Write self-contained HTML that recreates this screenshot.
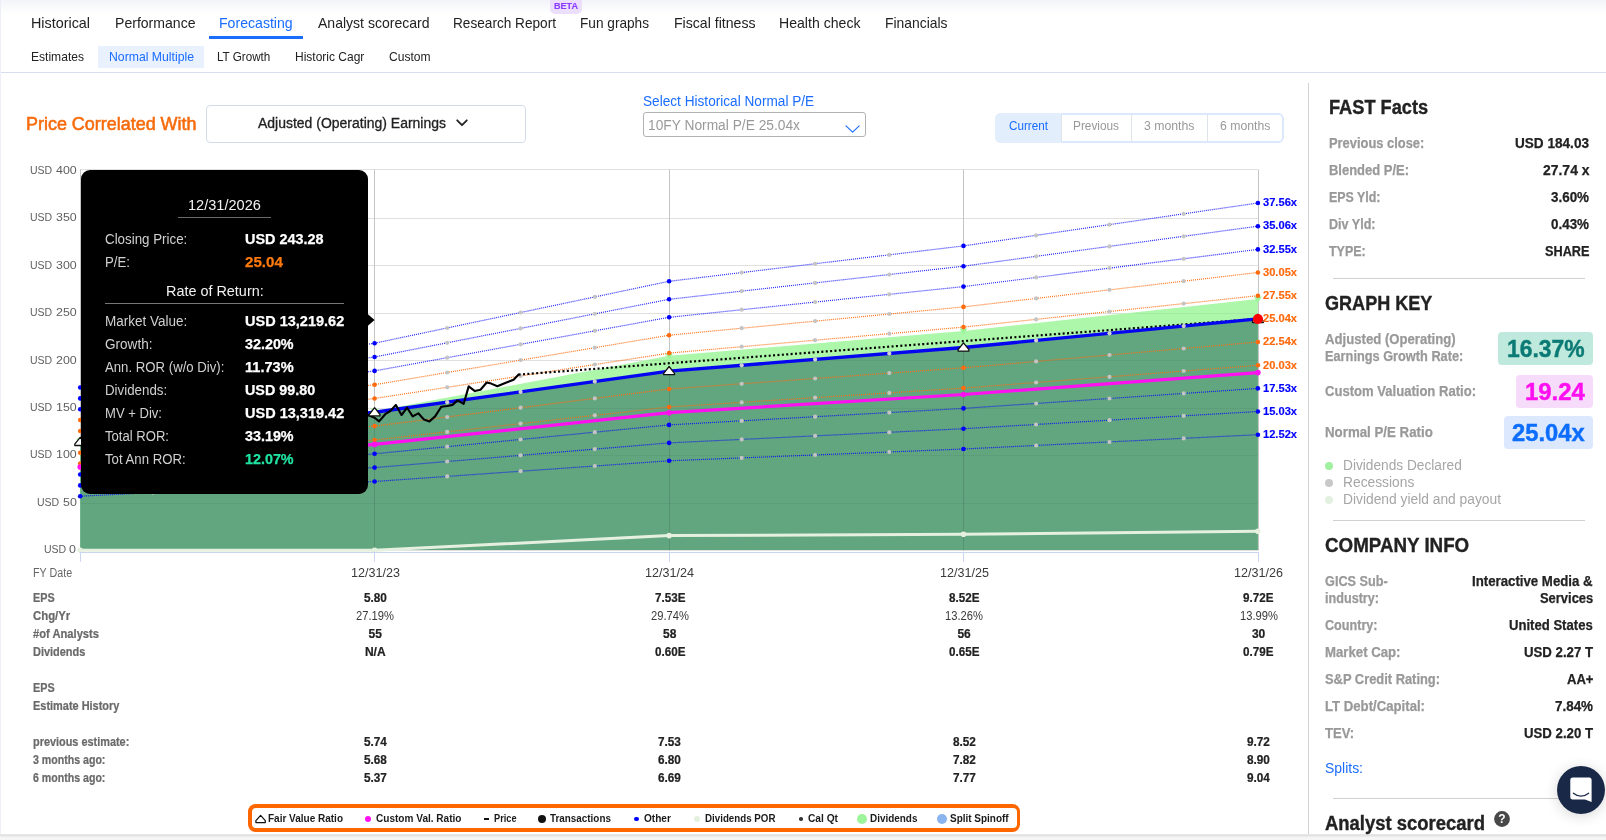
<!DOCTYPE html>
<html><head><meta charset="utf-8"><title>Forecasting</title>
<style>
html,body{margin:0;padding:0;background:#fff;}
body{width:1606px;height:840px;overflow:hidden;position:relative;font-family:"Liberation Sans",sans-serif;}
.a{position:absolute;display:block;}
.t{position:absolute;white-space:pre;transform-origin:0 50%;font-family:"Liberation Sans",sans-serif;}
#w{position:absolute;left:0;top:0;width:1606px;height:840px;will-change:transform;}
</style></head><body><div id="w">
<div class="a" style="left:0px;top:0px;width:1606px;height:14px;background:linear-gradient(#f3f4f9,#fff)"></div>
<div class="a" style="left:0px;top:0px;width:1px;height:834px;background:#eceff8"></div>
<div class="a" style="left:1px;top:72px;width:1605px;height:1px;background:#d6def0"></div>
<div class="a" style="left:0px;top:834px;width:1606px;height:6px;background:linear-gradient(#ececec 0px,#dfdfdf 1.2px,#ececec 2.6px,#f5f5f5 3.4px)"></div>
<span class="t" style="left:31.00px;top:15px;font-size:15px;line-height:15px;color:#222;transform:scaleX(0.9566);">Historical</span>
<span class="t" style="left:114.50px;top:15px;font-size:15px;line-height:15px;color:#222;transform:scaleX(0.9374);">Performance</span>
<span class="t" style="left:219.40px;top:15px;font-size:15px;line-height:15px;color:#1a6dff;transform:scaleX(0.9404);">Forecasting</span>
<span class="t" style="left:317.50px;top:15px;font-size:15px;line-height:15px;color:#222;transform:scaleX(0.9352);">Analyst scorecard</span>
<span class="t" style="left:453.00px;top:15px;font-size:15px;line-height:15px;color:#222;transform:scaleX(0.9084);">Research Report</span>
<span class="t" style="left:580.00px;top:15px;font-size:15px;line-height:15px;color:#222;transform:scaleX(0.9093);">Fun graphs</span>
<span class="t" style="left:673.50px;top:15px;font-size:15px;line-height:15px;color:#222;transform:scaleX(0.9401);">Fiscal fitness</span>
<span class="t" style="left:779.00px;top:15px;font-size:15px;line-height:15px;color:#222;transform:scaleX(0.9399);">Health check</span>
<span class="t" style="left:885.00px;top:15px;font-size:15px;line-height:15px;color:#222;transform:scaleX(0.9255);">Financials</span>
<div class="a" style="left:209px;top:36px;width:94px;height:3px;background:#1a6dff"></div>
<div class="a" style="left:550px;top:0px;width:32px;height:13.8px;background:#ebdffb;border-radius:0 0 5px 5px"></div>
<span class="t" style="left:553.70px;top:2px;font-size:9px;line-height:9px;color:#8b3dff;font-weight:700;-webkit-text-stroke-width:0.16px;transform:scaleX(1.0070);">BETA</span>
<div class="a" style="left:98px;top:46px;width:106px;height:22px;background:#e8f1fd"></div>
<span class="t" style="left:31.00px;top:50px;font-size:13px;line-height:13px;color:#222;transform:scaleX(0.9286);">Estimates</span>
<span class="t" style="left:108.50px;top:50px;font-size:13px;line-height:13px;color:#1a6dff;transform:scaleX(0.9413);">Normal Multiple</span>
<span class="t" style="left:217.40px;top:50px;font-size:13px;line-height:13px;color:#222;transform:scaleX(0.8960);">LT Growth</span>
<span class="t" style="left:295.10px;top:50px;font-size:13px;line-height:13px;color:#222;transform:scaleX(0.9224);">Historic Cagr</span>
<span class="t" style="left:388.50px;top:50px;font-size:13px;line-height:13px;color:#222;transform:scaleX(0.9288);">Custom</span>
<span class="t" style="left:25.50px;top:115px;font-size:18px;line-height:18px;color:#f76b0c;transform:scaleX(0.9967);-webkit-text-stroke:0.55px #f76b0c;">Price Correlated With</span>
<div class="a" style="left:206px;top:105px;width:320px;height:38px;border:1px solid #d3dbe8;border-radius:4px;box-sizing:border-box;background:#fff"></div>
<span class="t" style="left:258.00px;top:116px;font-size:14px;line-height:14px;color:#222;transform:scaleX(0.9983);-webkit-text-stroke:0.3px #222;">Adjusted (Operating) Earnings</span>
<svg class="a" style="left:455px;top:117px" width="14" height="12" viewBox="0 0 14 12"><path d="M2.2 3.3 L7 8.2 L11.8 3.3" fill="none" stroke="#222" stroke-width="1.8" stroke-linecap="round" stroke-linejoin="round"/></svg>
<span class="t" style="left:642.80px;top:94px;font-size:14px;line-height:14px;color:#1a6dff;transform:scaleX(0.9737);">Select Historical Normal P/E</span>
<div class="a" style="left:643px;top:112px;width:223px;height:25px;border:1px solid #b2b2b2;border-radius:3px;box-sizing:border-box;background:#fff"></div>
<span class="t" style="left:648.00px;top:118px;font-size:14px;line-height:14px;color:#999;transform:scaleX(0.9832);">10FY Normal P/E 25.04x</span>
<svg class="a" style="left:844px;top:123px" width="18" height="12" viewBox="0 0 18 12"><path d="M2 2.8 L8.6 9.2 L15.2 2.8" fill="none" stroke="#1a6dff" stroke-width="1.15" stroke-linecap="round" stroke-linejoin="round"/></svg>
<div class="a" style="left:995px;top:113px;width:288.5px;height:29.5px;border:2px solid #dce8fb;border-radius:6px;box-sizing:border-box;background:#fff"></div>
<div class="a" style="left:995px;top:113px;width:66px;height:29.5px;background:#e3eefc;border-radius:6px 0 0 6px"></div>
<div class="a" style="left:1060.5px;top:115px;width:1px;height:25.5px;background:#dfe3ea"></div>
<div class="a" style="left:1131px;top:115px;width:1px;height:25.5px;background:#dfe3ea"></div>
<div class="a" style="left:1207px;top:115px;width:1px;height:25.5px;background:#dfe3ea"></div>
<span class="t" style="left:1009.00px;top:119px;font-size:13px;line-height:13px;color:#1a6dff;transform:scaleX(0.8997);">Current</span>
<span class="t" style="left:1073.00px;top:119px;font-size:13px;line-height:13px;color:#999;transform:scaleX(0.9094);">Previous</span>
<span class="t" style="left:1144.00px;top:119px;font-size:13px;line-height:13px;color:#999;transform:scaleX(0.9444);">3 months</span>
<span class="t" style="left:1219.50px;top:119px;font-size:13px;line-height:13px;color:#999;transform:scaleX(0.9444);">6 months</span>
<svg class="a" style="left:0;top:160px" width="1310" height="406" viewBox="0 160 1310 406">
<line x1="80.2" x2="1257.9" y1="550.5" y2="550.5" stroke="#e0e0e0" stroke-width="1"/>
<line x1="80.2" x2="1257.9" y1="503.5" y2="503.5" stroke="#e0e0e0" stroke-width="1"/>
<line x1="80.2" x2="1257.9" y1="455.5" y2="455.5" stroke="#e0e0e0" stroke-width="1"/>
<line x1="80.2" x2="1257.9" y1="408.5" y2="408.5" stroke="#e0e0e0" stroke-width="1"/>
<line x1="80.2" x2="1257.9" y1="360.5" y2="360.5" stroke="#e0e0e0" stroke-width="1"/>
<line x1="80.2" x2="1257.9" y1="313.5" y2="313.5" stroke="#e0e0e0" stroke-width="1"/>
<line x1="80.2" x2="1257.9" y1="265.5" y2="265.5" stroke="#e0e0e0" stroke-width="1"/>
<line x1="80.2" x2="1257.9" y1="218.5" y2="218.5" stroke="#e0e0e0" stroke-width="1"/>
<line x1="80.2" x2="1257.9" y1="169.5" y2="169.5" stroke="#e0e0e0" stroke-width="1"/>
<line x1="80.5" x2="80.5" y1="169.5" y2="550.6" stroke="#c4c4c4" stroke-width="1"/>
<line x1="374.5" x2="374.5" y1="169.5" y2="550.6" stroke="#c4c4c4" stroke-width="1"/>
<line x1="669.5" x2="669.5" y1="169.5" y2="550.6" stroke="#c4c4c4" stroke-width="1"/>
<line x1="963.5" x2="963.5" y1="169.5" y2="550.6" stroke="#c4c4c4" stroke-width="1"/>
<line x1="1258.5" x2="1258.5" y1="169.5" y2="550.6" stroke="#c4c4c4" stroke-width="1"/>
<polygon points="80.2,440.9 374.6,411.3 669.1,355.8 963.5,331.0 1257.9,299.1 1257.9,550 80.2,550" fill="#adf7aa"/>
<polygon points="80.2,441.9 374.6,412.3 669.1,371.1 963.5,347.5 1257.9,318.9 1257.9,550 80.2,550" fill="#62a680"/>
<clipPath id="cg"><polygon points="80.2,441.9 374.6,412.3 669.1,356.8 963.5,332.0 1257.9,300.1 1257.9,550.6 80.2,550.6"/></clipPath><g clip-path="url(#cg)">
<line x1="80.2" x2="1257.9" y1="503.5" y2="503.5" stroke="#000" stroke-opacity="0.05" stroke-width="1"/>
<line x1="80.2" x2="1257.9" y1="455.5" y2="455.5" stroke="#000" stroke-opacity="0.05" stroke-width="1"/>
<line x1="80.2" x2="1257.9" y1="408.5" y2="408.5" stroke="#000" stroke-opacity="0.05" stroke-width="1"/>
<line x1="80.2" x2="1257.9" y1="360.5" y2="360.5" stroke="#000" stroke-opacity="0.05" stroke-width="1"/>
<line x1="80.2" x2="1257.9" y1="313.5" y2="313.5" stroke="#000" stroke-opacity="0.05" stroke-width="1"/>
<line x1="374.5" x2="374.5" y1="412.3" y2="550.6" stroke="#000" stroke-opacity="0.12" stroke-width="1"/>
<line x1="669.5" x2="669.5" y1="371.1" y2="550.6" stroke="#000" stroke-opacity="0.12" stroke-width="1"/>
<line x1="963.5" x2="963.5" y1="347.5" y2="550.6" stroke="#000" stroke-opacity="0.12" stroke-width="1"/>
</g>
<polygon points="76.3,438.4 84.1,438.4 80.2,445.1" fill="#9cf59a"/>
<polygon points="370.7,408.8 378.5,408.8 374.6,415.5" fill="#9cf59a"/>
<polygon points="665.2,353.3 673.0,353.3 669.1,360.0" fill="#9cf59a"/>
<polygon points="959.6,328.5 967.4,328.5 963.5,335.2" fill="#9cf59a"/>
<polygon points="1254.0,296.6 1261.8,296.6 1257.9,303.3" fill="#9cf59a"/>
<polyline points="80.2,387.5 374.6,343.2 669.1,281.3 963.5,245.9 1257.9,203.0" fill="none" stroke="#0000ff" stroke-opacity="0.85" stroke-width="1.2" stroke-dasharray="1 1"/>
<circle cx="152.8" cy="376.6" r="2.1" fill="#c4c4c4"/><circle cx="226.2" cy="365.6" r="2.1" fill="#c4c4c4"/><circle cx="300.4" cy="354.4" r="2.1" fill="#c4c4c4"/><circle cx="447.2" cy="328.0" r="2.1" fill="#c4c4c4"/><circle cx="520.6" cy="312.5" r="2.1" fill="#c4c4c4"/><circle cx="594.8" cy="296.9" r="2.1" fill="#c4c4c4"/><circle cx="741.7" cy="272.6" r="2.1" fill="#c4c4c4"/><circle cx="815.1" cy="263.8" r="2.1" fill="#c4c4c4"/><circle cx="889.3" cy="254.9" r="2.1" fill="#c4c4c4"/><circle cx="1036.1" cy="235.4" r="2.1" fill="#c4c4c4"/><circle cx="1109.5" cy="224.7" r="2.1" fill="#c4c4c4"/><circle cx="1183.7" cy="213.9" r="2.1" fill="#c4c4c4"/>
<circle cx="80.2" cy="387.5" r="2.3" fill="#0000ff"/>
<circle cx="374.6" cy="343.2" r="2.3" fill="#0000ff"/>
<circle cx="669.1" cy="281.3" r="2.3" fill="#0000ff"/>
<circle cx="963.5" cy="245.9" r="2.3" fill="#0000ff"/>
<circle cx="1257.9" cy="203.0" r="2.3" fill="#0000ff"/>
<polyline points="80.2,398.4 374.6,357.0 669.1,299.3 963.5,266.2 1257.9,226.2" fill="none" stroke="#0000ff" stroke-opacity="0.85" stroke-width="1.2" stroke-dasharray="1 1"/>
<circle cx="152.8" cy="388.2" r="2.1" fill="#c4c4c4"/><circle cx="226.2" cy="377.9" r="2.1" fill="#c4c4c4"/><circle cx="300.4" cy="367.4" r="2.1" fill="#c4c4c4"/><circle cx="447.2" cy="342.8" r="2.1" fill="#c4c4c4"/><circle cx="520.6" cy="328.4" r="2.1" fill="#c4c4c4"/><circle cx="594.8" cy="313.8" r="2.1" fill="#c4c4c4"/><circle cx="741.7" cy="291.1" r="2.1" fill="#c4c4c4"/><circle cx="815.1" cy="282.9" r="2.1" fill="#c4c4c4"/><circle cx="889.3" cy="274.6" r="2.1" fill="#c4c4c4"/><circle cx="1036.1" cy="256.3" r="2.1" fill="#c4c4c4"/><circle cx="1109.5" cy="246.4" r="2.1" fill="#c4c4c4"/><circle cx="1183.7" cy="236.3" r="2.1" fill="#c4c4c4"/>
<circle cx="80.2" cy="398.4" r="2.3" fill="#0000ff"/>
<circle cx="374.6" cy="357.0" r="2.3" fill="#0000ff"/>
<circle cx="669.1" cy="299.3" r="2.3" fill="#0000ff"/>
<circle cx="963.5" cy="266.2" r="2.3" fill="#0000ff"/>
<circle cx="1257.9" cy="226.2" r="2.3" fill="#0000ff"/>
<polyline points="80.2,409.3 374.6,370.9 669.1,317.3 963.5,286.6 1257.9,249.4" fill="none" stroke="#0000ff" stroke-opacity="0.85" stroke-width="1.2" stroke-dasharray="1 1"/>
<circle cx="152.8" cy="399.8" r="2.1" fill="#c4c4c4"/><circle cx="226.2" cy="390.2" r="2.1" fill="#c4c4c4"/><circle cx="300.4" cy="380.6" r="2.1" fill="#c4c4c4"/><circle cx="447.2" cy="357.7" r="2.1" fill="#c4c4c4"/><circle cx="520.6" cy="344.3" r="2.1" fill="#c4c4c4"/><circle cx="594.8" cy="330.8" r="2.1" fill="#c4c4c4"/><circle cx="741.7" cy="309.7" r="2.1" fill="#c4c4c4"/><circle cx="815.1" cy="302.1" r="2.1" fill="#c4c4c4"/><circle cx="889.3" cy="294.3" r="2.1" fill="#c4c4c4"/><circle cx="1036.1" cy="277.4" r="2.1" fill="#c4c4c4"/><circle cx="1109.5" cy="268.1" r="2.1" fill="#c4c4c4"/><circle cx="1183.7" cy="258.8" r="2.1" fill="#c4c4c4"/>
<circle cx="80.2" cy="409.3" r="2.3" fill="#0000ff"/>
<circle cx="374.6" cy="370.9" r="2.3" fill="#0000ff"/>
<circle cx="669.1" cy="317.3" r="2.3" fill="#0000ff"/>
<circle cx="963.5" cy="286.6" r="2.3" fill="#0000ff"/>
<circle cx="1257.9" cy="249.4" r="2.3" fill="#0000ff"/>
<polyline points="80.2,420.1 374.6,384.7 669.1,335.2 963.5,306.9 1257.9,272.5" fill="none" stroke="#ff6a0d" stroke-opacity="0.95" stroke-width="1.2" stroke-dasharray="1 1"/>
<circle cx="152.8" cy="411.4" r="2.1" fill="#c4c4c4"/><circle cx="226.2" cy="402.6" r="2.1" fill="#c4c4c4"/><circle cx="300.4" cy="393.6" r="2.1" fill="#c4c4c4"/><circle cx="447.2" cy="372.5" r="2.1" fill="#c4c4c4"/><circle cx="520.6" cy="360.1" r="2.1" fill="#c4c4c4"/><circle cx="594.8" cy="347.7" r="2.1" fill="#c4c4c4"/><circle cx="741.7" cy="328.2" r="2.1" fill="#c4c4c4"/><circle cx="815.1" cy="321.1" r="2.1" fill="#c4c4c4"/><circle cx="889.3" cy="314.0" r="2.1" fill="#c4c4c4"/><circle cx="1036.1" cy="298.4" r="2.1" fill="#c4c4c4"/><circle cx="1109.5" cy="289.8" r="2.1" fill="#c4c4c4"/><circle cx="1183.7" cy="281.2" r="2.1" fill="#c4c4c4"/>
<circle cx="80.2" cy="420.1" r="2.3" fill="#ff6a0d"/>
<circle cx="374.6" cy="384.7" r="2.3" fill="#ff6a0d"/>
<circle cx="669.1" cy="335.2" r="2.3" fill="#ff6a0d"/>
<circle cx="963.5" cy="306.9" r="2.3" fill="#ff6a0d"/>
<circle cx="1257.9" cy="272.5" r="2.3" fill="#ff6a0d"/>
<polyline points="80.2,431.0 374.6,398.5 669.1,353.1 963.5,327.1 1257.9,295.7" fill="none" stroke="#ff6a0d" stroke-opacity="0.95" stroke-width="1.2" stroke-dasharray="1 1"/>
<circle cx="152.8" cy="423.0" r="2.1" fill="#c4c4c4"/><circle cx="226.2" cy="414.9" r="2.1" fill="#c4c4c4"/><circle cx="300.4" cy="406.7" r="2.1" fill="#c4c4c4"/><circle cx="447.2" cy="387.3" r="2.1" fill="#c4c4c4"/><circle cx="520.6" cy="376.0" r="2.1" fill="#c4c4c4"/><circle cx="594.8" cy="364.5" r="2.1" fill="#c4c4c4"/><circle cx="741.7" cy="346.7" r="2.1" fill="#c4c4c4"/><circle cx="815.1" cy="340.2" r="2.1" fill="#c4c4c4"/><circle cx="889.3" cy="333.7" r="2.1" fill="#c4c4c4"/><circle cx="1036.1" cy="319.4" r="2.1" fill="#c4c4c4"/><circle cx="1109.5" cy="311.5" r="2.1" fill="#c4c4c4"/><circle cx="1183.7" cy="303.6" r="2.1" fill="#c4c4c4"/>
<circle cx="80.2" cy="431.0" r="2.3" fill="#ff6a0d"/>
<circle cx="374.6" cy="398.5" r="2.3" fill="#ff6a0d"/>
<circle cx="669.1" cy="353.1" r="2.3" fill="#ff6a0d"/>
<circle cx="963.5" cy="327.1" r="2.3" fill="#ff6a0d"/>
<circle cx="1257.9" cy="295.7" r="2.3" fill="#ff6a0d"/>
<polyline points="80.2,452.7 374.6,426.1 669.1,389.0 963.5,367.8 1257.9,342.0" fill="none" stroke="#ff6a0d" stroke-opacity="0.95" stroke-width="1.2" stroke-dasharray="1 1"/>
<circle cx="152.8" cy="446.2" r="2.1" fill="#c4c4c4"/><circle cx="226.2" cy="439.6" r="2.1" fill="#c4c4c4"/><circle cx="300.4" cy="432.9" r="2.1" fill="#c4c4c4"/><circle cx="447.2" cy="417.0" r="2.1" fill="#c4c4c4"/><circle cx="520.6" cy="407.7" r="2.1" fill="#c4c4c4"/><circle cx="594.8" cy="398.4" r="2.1" fill="#c4c4c4"/><circle cx="741.7" cy="383.8" r="2.1" fill="#c4c4c4"/><circle cx="815.1" cy="378.5" r="2.1" fill="#c4c4c4"/><circle cx="889.3" cy="373.1" r="2.1" fill="#c4c4c4"/><circle cx="1036.1" cy="361.4" r="2.1" fill="#c4c4c4"/><circle cx="1109.5" cy="355.0" r="2.1" fill="#c4c4c4"/><circle cx="1183.7" cy="348.5" r="2.1" fill="#c4c4c4"/>
<circle cx="80.2" cy="452.7" r="2.3" fill="#ff6a0d"/>
<circle cx="374.6" cy="426.1" r="2.3" fill="#ff6a0d"/>
<circle cx="669.1" cy="389.0" r="2.3" fill="#ff6a0d"/>
<circle cx="963.5" cy="367.8" r="2.3" fill="#ff6a0d"/>
<circle cx="1257.9" cy="342.0" r="2.3" fill="#ff6a0d"/>
<polyline points="80.2,463.6 374.6,440.0 669.1,407.0 963.5,388.1 1257.9,365.3" fill="none" stroke="#ff6a0d" stroke-opacity="0.95" stroke-width="1.2" stroke-dasharray="1 1"/>
<circle cx="152.8" cy="457.8" r="2.1" fill="#c4c4c4"/><circle cx="226.2" cy="451.9" r="2.1" fill="#c4c4c4"/><circle cx="300.4" cy="446.0" r="2.1" fill="#c4c4c4"/><circle cx="447.2" cy="431.9" r="2.1" fill="#c4c4c4"/><circle cx="520.6" cy="423.6" r="2.1" fill="#c4c4c4"/><circle cx="594.8" cy="415.3" r="2.1" fill="#c4c4c4"/><circle cx="741.7" cy="402.4" r="2.1" fill="#c4c4c4"/><circle cx="815.1" cy="397.7" r="2.1" fill="#c4c4c4"/><circle cx="889.3" cy="392.9" r="2.1" fill="#c4c4c4"/><circle cx="1036.1" cy="382.5" r="2.1" fill="#c4c4c4"/><circle cx="1109.5" cy="376.8" r="2.1" fill="#c4c4c4"/><circle cx="1183.7" cy="371.0" r="2.1" fill="#c4c4c4"/>
<circle cx="80.2" cy="463.6" r="2.3" fill="#ff6a0d"/>
<circle cx="374.6" cy="440.0" r="2.3" fill="#ff6a0d"/>
<circle cx="669.1" cy="407.0" r="2.3" fill="#ff6a0d"/>
<circle cx="963.5" cy="388.1" r="2.3" fill="#ff6a0d"/>
<circle cx="1257.9" cy="365.3" r="2.3" fill="#ff6a0d"/>
<polyline points="80.2,474.5 374.6,453.8 669.1,424.9 963.5,408.4 1257.9,388.4" fill="none" stroke="#0000ff" stroke-opacity="0.85" stroke-width="1.2" stroke-dasharray="1 1"/>
<circle cx="152.8" cy="469.4" r="2.1" fill="#c4c4c4"/><circle cx="226.2" cy="464.2" r="2.1" fill="#c4c4c4"/><circle cx="300.4" cy="459.0" r="2.1" fill="#c4c4c4"/><circle cx="447.2" cy="446.7" r="2.1" fill="#c4c4c4"/><circle cx="520.6" cy="439.5" r="2.1" fill="#c4c4c4"/><circle cx="594.8" cy="432.2" r="2.1" fill="#c4c4c4"/><circle cx="741.7" cy="420.9" r="2.1" fill="#c4c4c4"/><circle cx="815.1" cy="416.7" r="2.1" fill="#c4c4c4"/><circle cx="889.3" cy="412.6" r="2.1" fill="#c4c4c4"/><circle cx="1036.1" cy="403.5" r="2.1" fill="#c4c4c4"/><circle cx="1109.5" cy="398.5" r="2.1" fill="#c4c4c4"/><circle cx="1183.7" cy="393.4" r="2.1" fill="#c4c4c4"/>
<circle cx="80.2" cy="474.5" r="2.3" fill="#0000ff"/>
<circle cx="374.6" cy="453.8" r="2.3" fill="#0000ff"/>
<circle cx="669.1" cy="424.9" r="2.3" fill="#0000ff"/>
<circle cx="963.5" cy="408.4" r="2.3" fill="#0000ff"/>
<circle cx="1257.9" cy="388.4" r="2.3" fill="#0000ff"/>
<polyline points="80.2,485.4 374.6,467.6 669.1,442.9 963.5,428.7 1257.9,411.5" fill="none" stroke="#0000ff" stroke-opacity="0.85" stroke-width="1.2" stroke-dasharray="1 1"/>
<circle cx="152.8" cy="481.0" r="2.1" fill="#c4c4c4"/><circle cx="226.2" cy="476.6" r="2.1" fill="#c4c4c4"/><circle cx="300.4" cy="472.1" r="2.1" fill="#c4c4c4"/><circle cx="447.2" cy="461.5" r="2.1" fill="#c4c4c4"/><circle cx="520.6" cy="455.3" r="2.1" fill="#c4c4c4"/><circle cx="594.8" cy="449.1" r="2.1" fill="#c4c4c4"/><circle cx="741.7" cy="439.4" r="2.1" fill="#c4c4c4"/><circle cx="815.1" cy="435.8" r="2.1" fill="#c4c4c4"/><circle cx="889.3" cy="432.3" r="2.1" fill="#c4c4c4"/><circle cx="1036.1" cy="424.5" r="2.1" fill="#c4c4c4"/><circle cx="1109.5" cy="420.2" r="2.1" fill="#c4c4c4"/><circle cx="1183.7" cy="415.8" r="2.1" fill="#c4c4c4"/>
<circle cx="80.2" cy="485.4" r="2.3" fill="#0000ff"/>
<circle cx="374.6" cy="467.6" r="2.3" fill="#0000ff"/>
<circle cx="669.1" cy="442.9" r="2.3" fill="#0000ff"/>
<circle cx="963.5" cy="428.7" r="2.3" fill="#0000ff"/>
<circle cx="1257.9" cy="411.5" r="2.3" fill="#0000ff"/>
<polyline points="80.2,496.2 374.6,481.5 669.1,460.8 963.5,449.0 1257.9,434.7" fill="none" stroke="#0000ff" stroke-opacity="0.85" stroke-width="1.2" stroke-dasharray="1 1"/>
<circle cx="152.8" cy="492.6" r="2.1" fill="#c4c4c4"/><circle cx="226.2" cy="488.9" r="2.1" fill="#c4c4c4"/><circle cx="300.4" cy="485.2" r="2.1" fill="#c4c4c4"/><circle cx="447.2" cy="476.4" r="2.1" fill="#c4c4c4"/><circle cx="520.6" cy="471.2" r="2.1" fill="#c4c4c4"/><circle cx="594.8" cy="466.0" r="2.1" fill="#c4c4c4"/><circle cx="741.7" cy="457.9" r="2.1" fill="#c4c4c4"/><circle cx="815.1" cy="455.0" r="2.1" fill="#c4c4c4"/><circle cx="889.3" cy="452.0" r="2.1" fill="#c4c4c4"/><circle cx="1036.1" cy="445.5" r="2.1" fill="#c4c4c4"/><circle cx="1109.5" cy="442.0" r="2.1" fill="#c4c4c4"/><circle cx="1183.7" cy="438.4" r="2.1" fill="#c4c4c4"/>
<circle cx="80.2" cy="496.2" r="2.3" fill="#0000ff"/>
<circle cx="374.6" cy="481.5" r="2.3" fill="#0000ff"/>
<circle cx="669.1" cy="460.8" r="2.3" fill="#0000ff"/>
<circle cx="963.5" cy="449.0" r="2.3" fill="#0000ff"/>
<circle cx="1257.9" cy="434.7" r="2.3" fill="#0000ff"/>
<polyline points="80.2,467.1 374.6,444.4 669.1,412.7 963.5,394.5 1257.9,372.6" fill="none" stroke="#ff10f0" stroke-width="3.2" stroke-linejoin="round"/>
<circle cx="80.2" cy="467.1" r="2.8" fill="#ff10f0"/>
<circle cx="374.6" cy="444.4" r="2.8" fill="#ff10f0"/>
<circle cx="669.1" cy="412.7" r="2.8" fill="#ff10f0"/>
<circle cx="963.5" cy="394.5" r="2.8" fill="#ff10f0"/>
<circle cx="1257.9" cy="372.6" r="2.8" fill="#ff10f0"/>
<line x1="518.6" y1="374.6" x2="1257.9" y2="318.9" stroke="#000" stroke-width="2.2" stroke-dasharray="2 2.4"/>
<polyline points="80.2,441.9 374.6,412.3 669.1,371.1 963.5,347.5 1257.9,318.9" fill="none" stroke="#0505f0" stroke-width="3.4" stroke-linejoin="round"/>
<circle cx="152.8" cy="434.6" r="2.1" fill="#d0d0d0"/><circle cx="226.2" cy="427.2" r="2.1" fill="#d0d0d0"/><circle cx="300.4" cy="419.8" r="2.1" fill="#d0d0d0"/><circle cx="447.2" cy="402.2" r="2.1" fill="#d0d0d0"/><circle cx="520.6" cy="391.9" r="2.1" fill="#d0d0d0"/><circle cx="594.8" cy="381.5" r="2.1" fill="#d0d0d0"/><circle cx="741.7" cy="365.3" r="2.1" fill="#d0d0d0"/><circle cx="815.1" cy="359.4" r="2.1" fill="#d0d0d0"/><circle cx="889.3" cy="353.4" r="2.1" fill="#d0d0d0"/><circle cx="1036.1" cy="340.4" r="2.1" fill="#d0d0d0"/><circle cx="1109.5" cy="333.3" r="2.1" fill="#d0d0d0"/><circle cx="1183.7" cy="326.1" r="2.1" fill="#d0d0d0"/>
<polyline points="367.8,415 374.6,417.8 379.1,421.4 385.2,414.2 390.3,411 395.9,404.9 401.5,415 407.1,407.7 412.7,416.4 418.3,413.3 423.9,419.5 429.5,421.4 435.1,416.4 441.3,406.8 447.4,406 452.5,404.9 457.5,400.4 463.7,403.8 468.7,386.4 474.9,391.1 480.5,389.8 486.7,382.5 491.2,383.6 497.3,386.2 504.6,383.3 513.6,379.7 518.6,374.6" fill="none" stroke="#000" stroke-width="2.1" stroke-linejoin="round" stroke-linecap="round"/>
<path d="M74.8 445.5 L74.8 444.1 L80.2 437.3 L85.6 444.1 L85.6 445.5 Z" fill="#fff" stroke="#111" stroke-width="1.3" stroke-linejoin="round"/>
<path d="M369.2 415.9 L369.2 414.5 L374.6 407.7 L380.0 414.5 L380.0 415.9 Z" fill="#fff" stroke="#111" stroke-width="1.3" stroke-linejoin="round"/>
<path d="M663.7 374.7 L663.7 373.3 L669.1 366.5 L674.5 373.3 L674.5 374.7 Z" fill="#fff" stroke="#111" stroke-width="1.3" stroke-linejoin="round"/>
<path d="M958.1 351.1 L958.1 349.7 L963.5 342.9 L968.9 349.7 L968.9 351.1 Z" fill="#fff" stroke="#111" stroke-width="1.3" stroke-linejoin="round"/>
<path d="M1252.5 322.5 L1252.5 321.1 L1257.9 314.3 L1263.3 321.1 L1263.3 322.5 Z" fill="#fff" stroke="#111" stroke-width="1.3" stroke-linejoin="round"/>
<polyline points="80.2,550.3 374.6,550.3 669.1,535.6 963.5,534.2 1257.9,531.2" fill="none" stroke="#e6f0df" stroke-width="3" stroke-linejoin="round"/>
<circle cx="80.2" cy="550.3" r="2.8" fill="#e6f0df"/>
<circle cx="374.6" cy="550.3" r="2.8" fill="#e6f0df"/>
<circle cx="669.1" cy="535.6" r="2.8" fill="#e6f0df"/>
<circle cx="963.5" cy="534.2" r="2.8" fill="#e6f0df"/>
<circle cx="1257.9" cy="531.2" r="2.8" fill="#e6f0df"/>
<line x1="80.2" x2="1257.9" y1="552.5" y2="552.5" stroke="#c9d4f0" stroke-width="1"/>
<line x1="80.5" x2="80.5" y1="552" y2="561.8" stroke="#c9d4f0" stroke-width="1"/>
<line x1="374.5" x2="374.5" y1="552" y2="561.8" stroke="#c9d4f0" stroke-width="1"/>
<line x1="669.5" x2="669.5" y1="552" y2="561.8" stroke="#c9d4f0" stroke-width="1"/>
<line x1="963.5" x2="963.5" y1="552" y2="561.8" stroke="#c9d4f0" stroke-width="1"/>
<line x1="1258.5" x2="1258.5" y1="552" y2="561.8" stroke="#c9d4f0" stroke-width="1"/>
<circle cx="1257.9"  cy="319.0" r="5.1" fill="#ff0000"/>
</svg>
<span class="t" style="left:1263.40px;top:198px;font-size:10px;line-height:10px;color:#0000ff;font-weight:700;-webkit-text-stroke-width:0.18px;transform:scaleX(1.1116);-webkit-text-stroke:0.15px #0000ff;">37.56x</span>
<span class="t" style="left:1263.40px;top:221px;font-size:10px;line-height:10px;color:#0000ff;font-weight:700;-webkit-text-stroke-width:0.18px;transform:scaleX(1.1116);-webkit-text-stroke:0.15px #0000ff;">35.06x</span>
<span class="t" style="left:1263.40px;top:245px;font-size:10px;line-height:10px;color:#0000ff;font-weight:700;-webkit-text-stroke-width:0.18px;transform:scaleX(1.1116);-webkit-text-stroke:0.15px #0000ff;">32.55x</span>
<span class="t" style="left:1263.40px;top:268px;font-size:10px;line-height:10px;color:#ff6a0d;font-weight:700;-webkit-text-stroke-width:0.18px;transform:scaleX(1.1116);-webkit-text-stroke:0.15px #ff6a0d;">30.05x</span>
<span class="t" style="left:1263.40px;top:291px;font-size:10px;line-height:10px;color:#ff6a0d;font-weight:700;-webkit-text-stroke-width:0.18px;transform:scaleX(1.1116);-webkit-text-stroke:0.15px #ff6a0d;">27.55x</span>
<span class="t" style="left:1263.40px;top:314px;font-size:10px;line-height:10px;color:#ff6a0d;font-weight:700;-webkit-text-stroke-width:0.18px;transform:scaleX(1.1116);-webkit-text-stroke:0.15px #ff6a0d;">25.04x</span>
<span class="t" style="left:1263.40px;top:337px;font-size:10px;line-height:10px;color:#ff6a0d;font-weight:700;-webkit-text-stroke-width:0.18px;transform:scaleX(1.1116);-webkit-text-stroke:0.15px #ff6a0d;">22.54x</span>
<span class="t" style="left:1263.40px;top:361px;font-size:10px;line-height:10px;color:#ff6a0d;font-weight:700;-webkit-text-stroke-width:0.18px;transform:scaleX(1.1116);-webkit-text-stroke:0.15px #ff6a0d;">20.03x</span>
<span class="t" style="left:1263.40px;top:384px;font-size:10px;line-height:10px;color:#0000ff;font-weight:700;-webkit-text-stroke-width:0.18px;transform:scaleX(1.1116);-webkit-text-stroke:0.15px #0000ff;">17.53x</span>
<span class="t" style="left:1263.40px;top:407px;font-size:10px;line-height:10px;color:#0000ff;font-weight:700;-webkit-text-stroke-width:0.18px;transform:scaleX(1.1116);-webkit-text-stroke:0.15px #0000ff;">15.03x</span>
<span class="t" style="left:1263.40px;top:430px;font-size:10px;line-height:10px;color:#0000ff;font-weight:700;-webkit-text-stroke-width:0.18px;transform:scaleX(1.1116);-webkit-text-stroke:0.15px #0000ff;">12.52x</span>
<span class="t" style="left:69.40px;top:545px;font-size:10px;line-height:10px;color:#606060;transform:scaleX(1.2406);">0</span>
<span class="t" style="left:43.80px;top:545px;font-size:10px;line-height:10px;color:#606060;transform:scaleX(1.0514);">USD</span>
<span class="t" style="left:62.50px;top:498px;font-size:10px;line-height:10px;color:#606060;transform:scaleX(1.2406);">50</span>
<span class="t" style="left:36.90px;top:498px;font-size:10px;line-height:10px;color:#606060;transform:scaleX(1.0514);">USD</span>
<span class="t" style="left:55.60px;top:450px;font-size:10px;line-height:10px;color:#606060;transform:scaleX(1.2406);">100</span>
<span class="t" style="left:30.00px;top:450px;font-size:10px;line-height:10px;color:#606060;transform:scaleX(1.0514);">USD</span>
<span class="t" style="left:55.60px;top:403px;font-size:10px;line-height:10px;color:#606060;transform:scaleX(1.2406);">150</span>
<span class="t" style="left:30.00px;top:403px;font-size:10px;line-height:10px;color:#606060;transform:scaleX(1.0514);">USD</span>
<span class="t" style="left:55.60px;top:356px;font-size:10px;line-height:10px;color:#606060;transform:scaleX(1.2406);">200</span>
<span class="t" style="left:30.00px;top:356px;font-size:10px;line-height:10px;color:#606060;transform:scaleX(1.0514);">USD</span>
<span class="t" style="left:55.60px;top:308px;font-size:10px;line-height:10px;color:#606060;transform:scaleX(1.2406);">250</span>
<span class="t" style="left:30.00px;top:308px;font-size:10px;line-height:10px;color:#606060;transform:scaleX(1.0514);">USD</span>
<span class="t" style="left:55.60px;top:261px;font-size:10px;line-height:10px;color:#606060;transform:scaleX(1.2406);">300</span>
<span class="t" style="left:30.00px;top:261px;font-size:10px;line-height:10px;color:#606060;transform:scaleX(1.0514);">USD</span>
<span class="t" style="left:55.60px;top:213px;font-size:10px;line-height:10px;color:#606060;transform:scaleX(1.2406);">350</span>
<span class="t" style="left:30.00px;top:213px;font-size:10px;line-height:10px;color:#606060;transform:scaleX(1.0514);">USD</span>
<span class="t" style="left:55.60px;top:166px;font-size:10px;line-height:10px;color:#606060;transform:scaleX(1.2406);">400</span>
<span class="t" style="left:30.00px;top:166px;font-size:10px;line-height:10px;color:#606060;transform:scaleX(1.0514);">USD</span>
<div class="a" style="left:81px;top:170px;width:287px;height:324.4px;background:#000;border-radius:9px"></div>
<svg class="a" style="left:367px;top:312px" width="9" height="16" viewBox="0 0 9 16"><path d="M0 1.5 L7.6 8 L0 14.5 Z" fill="#000"/></svg>
<span class="t" style="left:188.30px;top:198px;font-size:14px;line-height:14px;color:#f2f2f2;transform:scaleX(1.0404);">12/31/2026</span>
<div class="a" style="left:178px;top:217px;width:93px;height:1px;background:#6a6a6a"></div>
<span class="t" style="left:105.40px;top:232px;font-size:14px;line-height:14px;color:#d0d0d0;transform:scaleX(0.9529);">Closing Price:</span>
<span class="t" style="left:245.00px;top:232px;font-size:14px;line-height:14px;color:#fff;font-weight:700;-webkit-text-stroke-width:0.25px;transform:scaleX(1.0279);">USD 243.28</span>
<span class="t" style="left:105.40px;top:255px;font-size:14px;line-height:14px;color:#d0d0d0;transform:scaleX(0.9450);">P/E:</span>
<span class="t" style="left:245.00px;top:255px;font-size:14px;line-height:14px;color:#ff7a0d;font-weight:700;-webkit-text-stroke-width:0.25px;transform:scaleX(1.0818);">25.04</span>
<span class="t" style="left:105.40px;top:314px;font-size:14px;line-height:14px;color:#d0d0d0;transform:scaleX(0.9644);">Market Value:</span>
<span class="t" style="left:245.00px;top:314px;font-size:14px;line-height:14px;color:#fff;font-weight:700;-webkit-text-stroke-width:0.25px;transform:scaleX(1.0362);">USD 13,219.62</span>
<span class="t" style="left:105.40px;top:337px;font-size:14px;line-height:14px;color:#d0d0d0;transform:scaleX(0.9691);">Growth:</span>
<span class="t" style="left:245.00px;top:337px;font-size:14px;line-height:14px;color:#fff;font-weight:700;-webkit-text-stroke-width:0.25px;transform:scaleX(1.0235);">32.20%</span>
<span class="t" style="left:105.40px;top:360px;font-size:14px;line-height:14px;color:#d0d0d0;transform:scaleX(0.9416);">Ann. ROR (w/o Div):</span>
<span class="t" style="left:245.00px;top:360px;font-size:14px;line-height:14px;color:#fff;font-weight:700;-webkit-text-stroke-width:0.25px;transform:scaleX(1.0404);">11.73%</span>
<span class="t" style="left:105.40px;top:383px;font-size:14px;line-height:14px;color:#d0d0d0;transform:scaleX(0.9516);">Dividends:</span>
<span class="t" style="left:245.00px;top:383px;font-size:14px;line-height:14px;color:#fff;font-weight:700;-webkit-text-stroke-width:0.25px;transform:scaleX(1.0251);">USD 99.80</span>
<span class="t" style="left:105.40px;top:406px;font-size:14px;line-height:14px;color:#d0d0d0;transform:scaleX(0.9334);">MV + Div:</span>
<span class="t" style="left:245.00px;top:406px;font-size:14px;line-height:14px;color:#fff;font-weight:700;-webkit-text-stroke-width:0.25px;transform:scaleX(1.0362);">USD 13,319.42</span>
<span class="t" style="left:105.40px;top:429px;font-size:14px;line-height:14px;color:#d0d0d0;transform:scaleX(0.9348);">Total ROR:</span>
<span class="t" style="left:245.00px;top:429px;font-size:14px;line-height:14px;color:#fff;font-weight:700;-webkit-text-stroke-width:0.25px;transform:scaleX(1.0235);">33.19%</span>
<span class="t" style="left:105.40px;top:452px;font-size:14px;line-height:14px;color:#d0d0d0;transform:scaleX(0.9417);">Tot Ann ROR:</span>
<span class="t" style="left:245.00px;top:452px;font-size:14px;line-height:14px;color:#20e3a0;font-weight:700;-webkit-text-stroke-width:0.25px;transform:scaleX(1.0235);">12.07%</span>
<span class="t" style="left:165.50px;top:284px;font-size:14px;line-height:14px;color:#f2f2f2;transform:scaleX(1.0291);">Rate of Return:</span>
<div class="a" style="left:105px;top:303px;width:239.2px;height:1px;background:#777"></div>
<span class="t" style="left:32.50px;top:567px;font-size:12px;line-height:12px;color:#666;transform:scaleX(0.8927);">FY Date</span>
<span class="t" style="left:350.75px;top:567px;font-size:12px;line-height:12px;color:#3a3a3a;transform:scaleX(1.0490);">12/31/23</span>
<span class="t" style="left:645.20px;top:567px;font-size:12px;line-height:12px;color:#3a3a3a;transform:scaleX(1.0490);">12/31/24</span>
<span class="t" style="left:939.65px;top:567px;font-size:12px;line-height:12px;color:#3a3a3a;transform:scaleX(1.0490);">12/31/25</span>
<span class="t" style="left:1234.10px;top:567px;font-size:12px;line-height:12px;color:#3a3a3a;transform:scaleX(1.0490);">12/31/26</span>
<span class="t" style="left:32.50px;top:592px;font-size:12px;line-height:12px;color:#6a6a6a;font-weight:700;-webkit-text-stroke-width:0.22px;transform:scaleX(0.8995);">EPS</span>
<span class="t" style="left:363.80px;top:592px;font-size:12px;line-height:12px;color:#222;font-weight:700;-webkit-text-stroke-width:0.22px;transform:scaleX(0.9805);">5.80</span>
<span class="t" style="left:654.50px;top:592px;font-size:12px;line-height:12px;color:#222;font-weight:700;-webkit-text-stroke-width:0.22px;transform:scaleX(0.9694);">7.53E</span>
<span class="t" style="left:948.95px;top:592px;font-size:12px;line-height:12px;color:#222;font-weight:700;-webkit-text-stroke-width:0.22px;transform:scaleX(0.9694);">8.52E</span>
<span class="t" style="left:1243.40px;top:592px;font-size:12px;line-height:12px;color:#222;font-weight:700;-webkit-text-stroke-width:0.22px;transform:scaleX(0.9694);">9.72E</span>
<span class="t" style="left:32.50px;top:610px;font-size:12px;line-height:12px;color:#6a6a6a;font-weight:700;-webkit-text-stroke-width:0.22px;transform:scaleX(0.9483);">Chg/Yr</span>
<span class="t" style="left:356.30px;top:610px;font-size:12px;line-height:12px;color:#3a3a3a;transform:scaleX(0.9312);">27.19%</span>
<span class="t" style="left:650.75px;top:610px;font-size:12px;line-height:12px;color:#3a3a3a;transform:scaleX(0.9312);">29.74%</span>
<span class="t" style="left:945.20px;top:610px;font-size:12px;line-height:12px;color:#3a3a3a;transform:scaleX(0.9312);">13.26%</span>
<span class="t" style="left:1239.65px;top:610px;font-size:12px;line-height:12px;color:#3a3a3a;transform:scaleX(0.9312);">13.99%</span>
<span class="t" style="left:32.50px;top:628px;font-size:12px;line-height:12px;color:#6a6a6a;font-weight:700;-webkit-text-stroke-width:0.22px;transform:scaleX(0.9307);">#of Analysts</span>
<span class="t" style="left:368.55px;top:628px;font-size:12px;line-height:12px;color:#222;font-weight:700;-webkit-text-stroke-width:0.22px;">55</span>
<span class="t" style="left:663.00px;top:628px;font-size:12px;line-height:12px;color:#222;font-weight:700;-webkit-text-stroke-width:0.22px;">58</span>
<span class="t" style="left:957.45px;top:628px;font-size:12px;line-height:12px;color:#222;font-weight:700;-webkit-text-stroke-width:0.22px;">56</span>
<span class="t" style="left:1251.90px;top:628px;font-size:12px;line-height:12px;color:#222;font-weight:700;-webkit-text-stroke-width:0.22px;">30</span>
<span class="t" style="left:32.50px;top:646px;font-size:12px;line-height:12px;color:#6a6a6a;font-weight:700;-webkit-text-stroke-width:0.22px;transform:scaleX(0.9120);">Dividends</span>
<span class="t" style="left:364.95px;top:646px;font-size:12px;line-height:12px;color:#222;font-weight:700;-webkit-text-stroke-width:0.22px;">N/A</span>
<span class="t" style="left:654.50px;top:646px;font-size:12px;line-height:12px;color:#222;font-weight:700;-webkit-text-stroke-width:0.22px;transform:scaleX(0.9694);">0.60E</span>
<span class="t" style="left:948.95px;top:646px;font-size:12px;line-height:12px;color:#222;font-weight:700;-webkit-text-stroke-width:0.22px;transform:scaleX(0.9694);">0.65E</span>
<span class="t" style="left:1243.40px;top:646px;font-size:12px;line-height:12px;color:#222;font-weight:700;-webkit-text-stroke-width:0.22px;transform:scaleX(0.9694);">0.79E</span>
<span class="t" style="left:32.50px;top:682px;font-size:12px;line-height:12px;color:#6a6a6a;font-weight:700;-webkit-text-stroke-width:0.22px;transform:scaleX(0.8995);">EPS</span>
<span class="t" style="left:32.50px;top:700px;font-size:12px;line-height:12px;color:#6a6a6a;font-weight:700;-webkit-text-stroke-width:0.22px;transform:scaleX(0.9123);">Estimate History</span>
<span class="t" style="left:32.50px;top:736px;font-size:12px;line-height:12px;color:#6a6a6a;font-weight:700;-webkit-text-stroke-width:0.22px;transform:scaleX(0.9082);">previous estimate:</span>
<span class="t" style="left:363.80px;top:736px;font-size:12px;line-height:12px;color:#222;font-weight:700;-webkit-text-stroke-width:0.22px;transform:scaleX(0.9805);">5.74</span>
<span class="t" style="left:658.25px;top:736px;font-size:12px;line-height:12px;color:#222;font-weight:700;-webkit-text-stroke-width:0.22px;transform:scaleX(0.9805);">7.53</span>
<span class="t" style="left:952.70px;top:736px;font-size:12px;line-height:12px;color:#222;font-weight:700;-webkit-text-stroke-width:0.22px;transform:scaleX(0.9805);">8.52</span>
<span class="t" style="left:1247.15px;top:736px;font-size:12px;line-height:12px;color:#222;font-weight:700;-webkit-text-stroke-width:0.22px;transform:scaleX(0.9805);">9.72</span>
<span class="t" style="left:32.50px;top:754px;font-size:12px;line-height:12px;color:#6a6a6a;font-weight:700;-webkit-text-stroke-width:0.22px;transform:scaleX(0.8829);">3 months ago:</span>
<span class="t" style="left:363.80px;top:754px;font-size:12px;line-height:12px;color:#222;font-weight:700;-webkit-text-stroke-width:0.22px;transform:scaleX(0.9805);">5.68</span>
<span class="t" style="left:658.25px;top:754px;font-size:12px;line-height:12px;color:#222;font-weight:700;-webkit-text-stroke-width:0.22px;transform:scaleX(0.9805);">6.80</span>
<span class="t" style="left:952.70px;top:754px;font-size:12px;line-height:12px;color:#222;font-weight:700;-webkit-text-stroke-width:0.22px;transform:scaleX(0.9805);">7.82</span>
<span class="t" style="left:1247.15px;top:754px;font-size:12px;line-height:12px;color:#222;font-weight:700;-webkit-text-stroke-width:0.22px;transform:scaleX(0.9805);">8.90</span>
<span class="t" style="left:32.50px;top:772px;font-size:12px;line-height:12px;color:#6a6a6a;font-weight:700;-webkit-text-stroke-width:0.22px;transform:scaleX(0.8829);">6 months ago:</span>
<span class="t" style="left:363.80px;top:772px;font-size:12px;line-height:12px;color:#222;font-weight:700;-webkit-text-stroke-width:0.22px;transform:scaleX(0.9805);">5.37</span>
<span class="t" style="left:658.25px;top:772px;font-size:12px;line-height:12px;color:#222;font-weight:700;-webkit-text-stroke-width:0.22px;transform:scaleX(0.9805);">6.69</span>
<span class="t" style="left:952.70px;top:772px;font-size:12px;line-height:12px;color:#222;font-weight:700;-webkit-text-stroke-width:0.22px;transform:scaleX(0.9805);">7.77</span>
<span class="t" style="left:1247.15px;top:772px;font-size:12px;line-height:12px;color:#222;font-weight:700;-webkit-text-stroke-width:0.22px;transform:scaleX(0.9805);">9.04</span>
<div class="a" style="left:248.2px;top:804.2px;width:772.3px;height:27.4px;background:#ff6600;border-radius:7.5px"></div>
<div class="a" style="left:251.9px;top:807.9px;width:764.9px;height:20px;background:#fff;border-radius:4px"></div>
<svg class="a" style="left:254px;top:812px" width="14" height="13" viewBox="0 0 14 13"><path d="M1.9 10.6 L1.9 8.6 L6.6 3.4 L11.3 8.6 L11.3 10.6 Z" fill="#fff" stroke="#111" stroke-width="1.25" stroke-linejoin="round"/></svg>
<span class="t" style="left:268.10px;top:813px;font-size:11px;line-height:11px;color:#1a1a1a;font-weight:700;-webkit-text-stroke-width:0.20px;transform:scaleX(0.9088);-webkit-text-stroke-width:0;">Fair Value Ratio</span>
<div class="a" style="left:364.8px;top:816.2px;width:6px;height:6px;background:#ff10f0;border-radius:50%"></div>
<span class="t" style="left:375.70px;top:813px;font-size:11px;line-height:11px;color:#1a1a1a;font-weight:700;-webkit-text-stroke-width:0.20px;transform:scaleX(0.9143);-webkit-text-stroke-width:0;">Custom Val. Ratio</span>
<div class="a" style="left:483.6px;top:818.3px;width:5.2px;height:1.8px;background:#111"></div>
<span class="t" style="left:494.00px;top:813px;font-size:11px;line-height:11px;color:#1a1a1a;font-weight:700;-webkit-text-stroke-width:0.20px;transform:scaleX(0.8361);-webkit-text-stroke-width:0;">Price</span>
<div class="a" style="left:537.9px;top:815.2px;width:8px;height:8px;background:#111;border-radius:50%"></div>
<span class="t" style="left:550.00px;top:813px;font-size:11px;line-height:11px;color:#1a1a1a;font-weight:700;-webkit-text-stroke-width:0.20px;transform:scaleX(0.8974);-webkit-text-stroke-width:0;">Transactions</span>
<div class="a" style="left:634.4px;top:816.9px;width:4.6px;height:4.6px;background:#0000ff;border-radius:50%"></div>
<span class="t" style="left:644.40px;top:813px;font-size:11px;line-height:11px;color:#1a1a1a;font-weight:700;-webkit-text-stroke-width:0.20px;transform:scaleX(0.9169);-webkit-text-stroke-width:0;">Other</span>
<div class="a" style="left:694.2px;top:816.2px;width:6px;height:6px;background:#e3f1e0;border-radius:50%"></div>
<span class="t" style="left:704.70px;top:813px;font-size:11px;line-height:11px;color:#1a1a1a;font-weight:700;-webkit-text-stroke-width:0.20px;transform:scaleX(0.8872);-webkit-text-stroke-width:0;">Dividends POR</span>
<div class="a" style="left:799.0px;top:817.4px;width:3.6px;height:3.6px;background:#333;border-radius:50%"></div>
<span class="t" style="left:808.00px;top:813px;font-size:11px;line-height:11px;color:#1a1a1a;font-weight:700;-webkit-text-stroke-width:0.20px;transform:scaleX(0.9261);-webkit-text-stroke-width:0;">Cal Qt</span>
<div class="a" style="left:857.4px;top:814.2px;width:10px;height:10px;background:#9df59b;border-radius:50%"></div>
<span class="t" style="left:870.30px;top:813px;font-size:11px;line-height:11px;color:#1a1a1a;font-weight:700;-webkit-text-stroke-width:0.20px;transform:scaleX(0.9017);-webkit-text-stroke-width:0;">Dividends</span>
<div class="a" style="left:936.8px;top:814.2px;width:10px;height:10px;background:#8ab4f0;border-radius:50%"></div>
<span class="t" style="left:950.00px;top:813px;font-size:11px;line-height:11px;color:#1a1a1a;font-weight:700;-webkit-text-stroke-width:0.20px;transform:scaleX(0.9048);-webkit-text-stroke-width:0;">Split Spinoff</span>
<div class="a" style="left:1308px;top:83px;width:1px;height:751px;background:#d4d4d4"></div>
<span class="t" style="left:1329.40px;top:97px;font-size:20px;line-height:20px;color:#222;font-weight:700;-webkit-text-stroke-width:0.36px;transform:scaleX(0.9098);">FAST Facts</span>
<span class="t" style="left:1329.40px;top:136px;font-size:14px;line-height:14px;color:#999;font-weight:700;-webkit-text-stroke-width:0.25px;transform:scaleX(0.9208);">Previous close:</span>
<span class="t" style="left:1515.00px;top:136px;font-size:14px;line-height:14px;color:#222;font-weight:700;-webkit-text-stroke-width:0.25px;transform:scaleX(0.9702);">USD 184.03</span>
<span class="t" style="left:1329.40px;top:163px;font-size:14px;line-height:14px;color:#999;font-weight:700;-webkit-text-stroke-width:0.25px;transform:scaleX(0.9265);">Blended P/E:</span>
<span class="t" style="left:1542.50px;top:163px;font-size:14px;line-height:14px;color:#222;font-weight:700;-webkit-text-stroke-width:0.25px;transform:scaleX(0.9955);">27.74 x</span>
<span class="t" style="left:1329.40px;top:190px;font-size:14px;line-height:14px;color:#999;font-weight:700;-webkit-text-stroke-width:0.25px;transform:scaleX(0.8865);">EPS Yld:</span>
<span class="t" style="left:1551.00px;top:190px;font-size:14px;line-height:14px;color:#222;font-weight:700;-webkit-text-stroke-width:0.25px;transform:scaleX(0.9573);">3.60%</span>
<span class="t" style="left:1329.40px;top:217px;font-size:14px;line-height:14px;color:#999;font-weight:700;-webkit-text-stroke-width:0.25px;transform:scaleX(0.8965);">Div Yld:</span>
<span class="t" style="left:1551.00px;top:217px;font-size:14px;line-height:14px;color:#222;font-weight:700;-webkit-text-stroke-width:0.25px;transform:scaleX(0.9573);">0.43%</span>
<span class="t" style="left:1329.40px;top:244px;font-size:14px;line-height:14px;color:#999;font-weight:700;-webkit-text-stroke-width:0.25px;transform:scaleX(0.8901);">TYPE:</span>
<span class="t" style="left:1544.50px;top:244px;font-size:14px;line-height:14px;color:#222;font-weight:700;-webkit-text-stroke-width:0.25px;transform:scaleX(0.9080);">SHARE</span>
<div class="a" style="left:1333px;top:278px;width:252px;height:1px;background:#d0d0d0"></div>
<span class="t" style="left:1325.00px;top:293px;font-size:20px;line-height:20px;color:#222;font-weight:700;-webkit-text-stroke-width:0.36px;transform:scaleX(0.9032);">GRAPH KEY</span>
<span class="t" style="left:1325.00px;top:332px;font-size:14px;line-height:14px;color:#999;font-weight:700;-webkit-text-stroke-width:0.25px;transform:scaleX(0.9388);">Adjusted (Operating)</span>
<span class="t" style="left:1325.00px;top:349px;font-size:14px;line-height:14px;color:#999;font-weight:700;-webkit-text-stroke-width:0.25px;transform:scaleX(0.9118);">Earnings Growth Rate:</span>
<div class="a" style="left:1498px;top:332px;width:95.2px;height:32.6px;background:#bfe9dc;border-radius:4px"></div>
<span class="t" style="left:1507.00px;top:338px;font-size:23px;line-height:23px;color:#0b7a75;font-weight:700;-webkit-text-stroke-width:0.41px;transform:scaleX(0.9948);">16.37%</span>
<span class="t" style="left:1325.00px;top:384px;font-size:14px;line-height:14px;color:#999;font-weight:700;-webkit-text-stroke-width:0.25px;transform:scaleX(0.9333);">Custom Valuation Ratio:</span>
<div class="a" style="left:1516px;top:375.2px;width:77.2px;height:32.4px;background:#f6dcfa;border-radius:4px"></div>
<span class="t" style="left:1524.70px;top:381px;font-size:23px;line-height:23px;color:#ff10f0;font-weight:700;-webkit-text-stroke-width:0.41px;transform:scaleX(1.0407);">19.24</span>
<span class="t" style="left:1325.00px;top:425px;font-size:14px;line-height:14px;color:#999;font-weight:700;-webkit-text-stroke-width:0.25px;transform:scaleX(0.9491);">Normal P/E Ratio</span>
<div class="a" style="left:1504.3px;top:416.4px;width:88.9px;height:32.3px;background:#dbe8fd;border-radius:4px"></div>
<span class="t" style="left:1512.00px;top:422px;font-size:23px;line-height:23px;color:#0d6efd;font-weight:700;-webkit-text-stroke-width:0.41px;transform:scaleX(1.0320);">25.04x</span>
<div class="a" style="left:1324.8px;top:461.6px;width:8.4px;height:8.4px;background:#a1f0a0;border-radius:50%"></div>
<div class="a" style="left:1324.8px;top:478.8px;width:8.4px;height:8.4px;background:#c8c8c8;border-radius:50%"></div>
<div class="a" style="left:1324.8px;top:495.6px;width:8.4px;height:8.4px;background:#e3f1e0;border-radius:50%"></div>
<span class="t" style="left:1343.00px;top:458px;font-size:14px;line-height:14px;color:#a6a6a6;transform:scaleX(0.9786);">Dividends Declared</span>
<span class="t" style="left:1343.00px;top:475px;font-size:14px;line-height:14px;color:#a6a6a6;transform:scaleX(0.9853);">Recessions</span>
<span class="t" style="left:1343.00px;top:492px;font-size:14px;line-height:14px;color:#a6a6a6;transform:scaleX(0.9854);">Dividend yield and payout</span>
<div class="a" style="left:1333px;top:520px;width:252px;height:1px;background:#d0d0d0"></div>
<span class="t" style="left:1325.00px;top:535px;font-size:20px;line-height:20px;color:#222;font-weight:700;-webkit-text-stroke-width:0.36px;transform:scaleX(0.9381);">COMPANY INFO</span>
<span class="t" style="left:1325.00px;top:574px;font-size:14px;line-height:14px;color:#999;font-weight:700;-webkit-text-stroke-width:0.25px;transform:scaleX(0.9072);">GICS Sub-</span>
<span class="t" style="left:1325.00px;top:591px;font-size:14px;line-height:14px;color:#999;font-weight:700;-webkit-text-stroke-width:0.25px;transform:scaleX(0.9016);">industry:</span>
<span class="t" style="left:1472.40px;top:574px;font-size:14px;line-height:14px;color:#222;font-weight:700;-webkit-text-stroke-width:0.25px;transform:scaleX(0.9451);">Interactive Media &amp;</span>
<span class="t" style="left:1539.80px;top:591px;font-size:14px;line-height:14px;color:#222;font-weight:700;-webkit-text-stroke-width:0.25px;transform:scaleX(0.9235);">Services</span>
<span class="t" style="left:1325.00px;top:618px;font-size:14px;line-height:14px;color:#999;font-weight:700;-webkit-text-stroke-width:0.25px;transform:scaleX(0.9001);">Country:</span>
<span class="t" style="left:1509.30px;top:618px;font-size:14px;line-height:14px;color:#222;font-weight:700;-webkit-text-stroke-width:0.25px;transform:scaleX(0.9356);">United States</span>
<span class="t" style="left:1325.00px;top:645px;font-size:14px;line-height:14px;color:#999;font-weight:700;-webkit-text-stroke-width:0.25px;transform:scaleX(0.9422);">Market Cap:</span>
<span class="t" style="left:1524.00px;top:645px;font-size:14px;line-height:14px;color:#222;font-weight:700;-webkit-text-stroke-width:0.25px;transform:scaleX(0.9434);">USD 2.27 T</span>
<span class="t" style="left:1325.00px;top:672px;font-size:14px;line-height:14px;color:#999;font-weight:700;-webkit-text-stroke-width:0.25px;transform:scaleX(0.9202);">S&amp;P Credit Rating:</span>
<span class="t" style="left:1566.50px;top:672px;font-size:14px;line-height:14px;color:#222;font-weight:700;-webkit-text-stroke-width:0.25px;transform:scaleX(0.9332);">AA+</span>
<span class="t" style="left:1325.00px;top:699px;font-size:14px;line-height:14px;color:#999;font-weight:700;-webkit-text-stroke-width:0.25px;transform:scaleX(0.9408);">LT Debt/Capital:</span>
<span class="t" style="left:1555.00px;top:699px;font-size:14px;line-height:14px;color:#222;font-weight:700;-webkit-text-stroke-width:0.25px;transform:scaleX(0.9573);">7.84%</span>
<span class="t" style="left:1325.00px;top:726px;font-size:14px;line-height:14px;color:#999;font-weight:700;-webkit-text-stroke-width:0.25px;transform:scaleX(0.9319);">TEV:</span>
<span class="t" style="left:1524.00px;top:726px;font-size:14px;line-height:14px;color:#222;font-weight:700;-webkit-text-stroke-width:0.25px;transform:scaleX(0.9434);">USD 2.20 T</span>
<span class="t" style="left:1325.00px;top:760px;font-size:15px;line-height:15px;color:#1a6dff;transform:scaleX(0.9303);">Splits:</span>
<div class="a" style="left:1333px;top:798px;width:252px;height:1px;background:#d0d0d0"></div>
<span class="t" style="left:1325.00px;top:813px;font-size:20px;line-height:20px;color:#222;font-weight:700;-webkit-text-stroke-width:0.36px;transform:scaleX(0.9226);">Analyst scorecard</span>
<svg class="a" style="left:1494px;top:810.8px" width="16" height="16" viewBox="0 0 16 16"><circle cx="8" cy="8" r="7.9" fill="#484848"/><text x="8" y="12.3" font-family="Liberation Sans" font-size="12" font-weight="700" fill="#fff" text-anchor="middle">?</text></svg>
<div class="a" style="left:1557px;top:766px;width:48px;height:48px;border-radius:50%;box-shadow:0 2px 14px rgba(0,0,0,0.16);"></div>
<svg class="a" style="left:1556px;top:765px" width="50" height="50" viewBox="0 0 50 50"><circle cx="25" cy="25" r="24" fill="#192847"/><path d="M16.8 12.6 H33.1 a2.5 2.5 0 0 1 2.5 2.5 V36.9 L29 34.5 H16.8 a2.5 2.5 0 0 1 -2.5 -2.5 V15.1 a2.5 2.5 0 0 1 2.5 -2.5 Z" fill="#fff"/><path d="M17.4 28.2 Q25 34.2 32.6 28.2" fill="none" stroke="#192847" stroke-width="1.3" stroke-linecap="round"/></svg>
</div></body></html>
